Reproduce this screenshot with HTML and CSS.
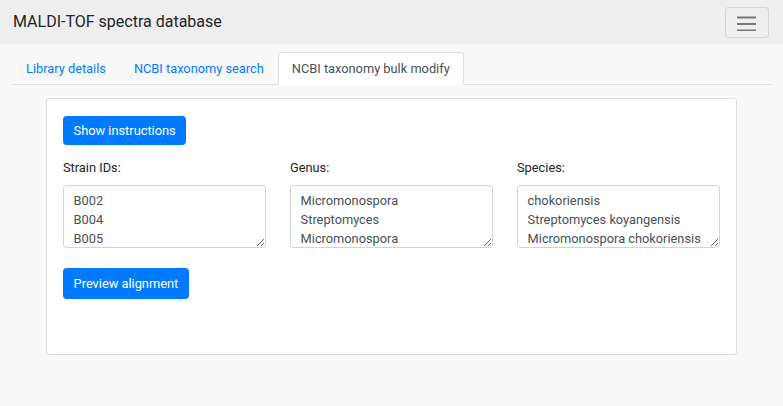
FILE: index.html
```html
<!DOCTYPE html>
<html lang="en">
<head>
<meta charset="utf-8">
<title>MALDI-TOF spectra database</title>
<link rel="stylesheet" href="styles.css">
</head>
<body>
<nav class="navbar">
  <span class="brand">MALDI-TOF spectra database</span>
  <button class="toggler" type="button" aria-label="Toggle navigation">
    <svg width="20" height="16" viewBox="0 0 20 16" aria-hidden="true">
      <path d="M0 2.5h19M0 9h19M0 15.5h19" stroke="rgba(0,0,0,0.5)" stroke-width="2" fill="none"/>
    </svg>
  </button>
</nav>
<main class="main">
  <ul class="tabs">
    <li><a class="tab-link" href="#">Library details</a></li>
    <li><a class="tab-link" href="#">NCBI taxonomy search</a></li>
    <li><a class="tab-link active" href="#">NCBI taxonomy bulk modify</a></li>
  </ul>
  <section class="card">
    <button class="btn" type="button">Show instructions</button>
    <div class="fields">
      <div class="field">
        <label class="label" for="ids">Strain IDs:</label>
        <textarea id="ids" class="input">B002
B004
B005</textarea>
      </div>
      <div class="field">
        <label class="label" for="genus">Genus:</label>
        <textarea id="genus" class="input">Micromonospora
Streptomyces
Micromonospora</textarea>
      </div>
      <div class="field">
        <label class="label" for="species">Species:</label>
        <textarea id="species" class="input">chokoriensis
Streptomyces koyangensis
Micromonospora chokoriensis</textarea>
      </div>
    </div>
    <button class="btn btn-preview" type="button">Preview alignment</button>
  </section>
</main>
</body>
</html>
```

FILE: styles.css
```css
* { box-sizing: border-box; }
html { font-size: 12.8px; }
body {
  margin: 0;
  font-family: Roboto, "Liberation Sans", Arial, sans-serif;
  font-size: 12.8px;
  line-height: 1.5;
  color: #212529;
  background: #f9f9f9;
}
.navbar {
  height: 44px;
  background: #eeeeee;
  display: flex;
  align-items: center;
  justify-content: space-between;
  padding: 0 14px 0 13px;
}
.brand {
  font-size: 16px;
  line-height: 1.5;
  color: #212529;
}
.toggler {
  width: 44px;
  height: 31px;
  margin-top: 1px;
  border: 1px solid rgba(0,0,0,0.1);
  border-radius: 3.25px;
  background: transparent;
  display: flex;
  align-items: center;
  justify-content: center;
  padding: 0;
}
.main { padding: 8px 12px 0; }
.tabs {
  list-style: none;
  margin: 0;
  padding: 0;
  display: flex;
  border-bottom: 1px solid #dee2e6;
}
.tabs li { margin-bottom: -1px; }
.tab-link {
  display: block;
  padding: 6px 13px;
  border: 1px solid transparent;
  border-top-left-radius: 3.25px;
  border-top-right-radius: 3.25px;
  color: #007bff;
  text-decoration: none;
  line-height: 19px;
}
.tab-link.active {
  color: #495057;
  background: #fff;
  border-color: #dee2e6 #dee2e6 #fff;
}
.card {
  margin: 13px 34px 0;
  background: #fff;
  border: 1px solid rgba(0,0,0,0.125);
  border-radius: 3.25px;
  padding: 17px 16px 55px;
}
.btn {
  display: inline-block;
  font-family: inherit;
  font-size: 12.8px;
  line-height: 19px;
  color: #fff;
  background: #007bff;
  border: 1px solid #007bff;
  border-radius: 3.25px;
  padding: 4px 9.6px;
}
.fields {
  display: grid;
  grid-template-columns: repeat(3, 1fr);
  column-gap: 24px;
  margin-top: 13px;
}
.field { display: flex; flex-direction: column; }
.label {
  line-height: 19.5px;
  margin-bottom: 7.5px;
}
.input {
  height: 63px;
  font-family: inherit;
  font-size: 12.8px;
  line-height: 19px;
  color: #495057;
  border: 1px solid #ced4da;
  border-radius: 3.25px;
  padding: 5px 9.6px;
  overflow: hidden;
  background: #fff;
}
.btn-preview { margin-top: 20px; padding: 4.5px 9.6px 5px; }
```
